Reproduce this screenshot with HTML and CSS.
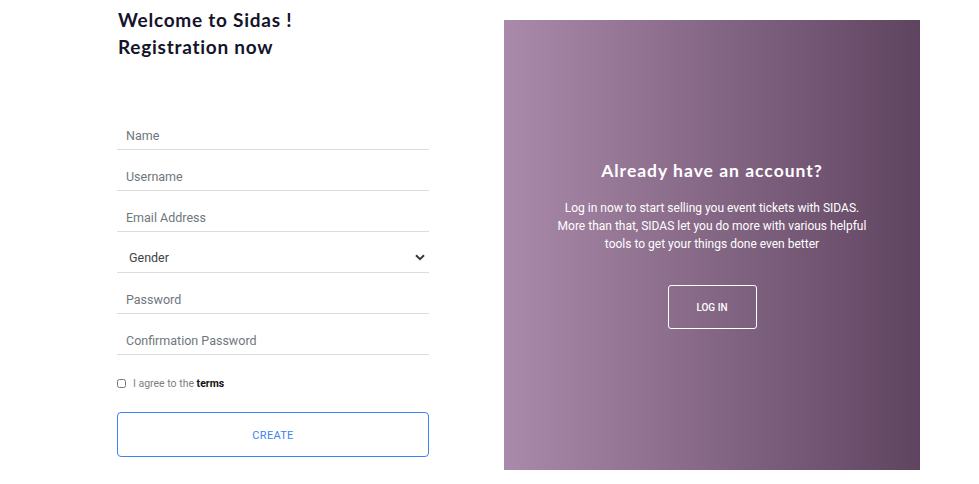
FILE: index.html
```html
<!DOCTYPE html>
<html>
<head>
<meta charset="utf-8">
<link rel="stylesheet" href="styles.css">
</head>
<body>
<div class="page">
  <section class="form-col">
    <h1 class="title">Welcome to Sidas !<br>Registration now</h1>
    <form class="form">
      <div class="field"><input class="input" placeholder="Name"></div>
      <div class="field"><input class="input" placeholder="Username"></div>
      <div class="field"><input class="input" placeholder="Email Address"></div>
      <div class="field select-field">
        <span class="select-text">Gender</span>
        <svg class="chev" width="10" height="7" viewBox="0 0 10 7"><path d="M1 1.2 L5 5.2 L9 1.2" fill="none" stroke="#343a40" stroke-width="2"/></svg>
      </div>
      <div class="field"><input class="input" placeholder="Password"></div>
      <div class="field"><input class="input" placeholder="Confirmation Password"></div>
      <label class="agree"><input type="checkbox" class="check"><span>I agree to the <b>terms</b></span></label>
      <button type="button" class="create">CREATE</button>
    </form>
  </section>
  <section class="panel">
    <h2 class="panel-title">Already have an account?</h2>
    <p class="panel-text">Log in now to start selling you event tickets with SIDAS.<br>More than that, SIDAS let you do more with various helpful<br>tools to get your things done even better</p>
    <button type="button" class="login">LOG IN</button>
  </section>
</div>
</body>
</html>
```
FILE: styles.css
```css
* { box-sizing: border-box; }
html, body { margin: 0; padding: 0; background: #fff; }
body { font-family: Roboto, "Liberation Sans", sans-serif; width: 979px; height: 484px; overflow: hidden; }
.page { display: flex; padding-left: 117px; gap: 75px; }
.form-col { width: 312px; }
.title {
  font-family: Lato, "Open Sans", sans-serif;
  font-weight: 700;
  font-size: 19px;
  line-height: 27px;
  color: #14142b;
  margin: 6px 0 0 1px;
  letter-spacing: 0.75px;
}
.form { margin-top: 49px; }
.field {
  height: 41px;
  border-bottom: 1px solid #dcdcdc;
  display: flex;
  align-items: center;
  padding-top: 12px;
}
.input {
  border: 0;
  outline: 0;
  width: 100%;
  padding: 0 0 0 9px;
  font-family: Roboto, sans-serif;
  font-size: 12.5px;
  background: transparent;
}
.input::placeholder { color: #6f767d; }
.select-field { justify-content: space-between; padding-left: 12px; padding-right: 4px; padding-top: 11px; }
.select-text { font-size: 12.5px; color: #3d4349; }
.agree {
  display: flex;
  align-items: center;
  gap: 7px;
  margin-top: 22px;
  font-size: 10.5px;
  color: #7a7f85;
}
.agree b { color: #111; font-weight: 700; }
.check { margin: 0; width: 9px; height: 9px; }
.create {
  display: block;
  width: 312px;
  height: 45px;
  margin-top: 22px;
  padding-top: 2px;
  border: 1px solid #3a82f7;
  border-radius: 4px;
  background: #fff;
  color: #3a82f7;
  font-family: Roboto, sans-serif;
  font-size: 11px;
  letter-spacing: 0.3px;
}
.panel {
  width: 416px;
  height: 450px;
  margin-top: 20px;
  background: linear-gradient(90deg, #aa8aaa 0%, #5f4460 100%);
  display: flex;
  flex-direction: column;
  align-items: center;
  color: #fff;
}
.panel-title {
  font-family: Lato, "Open Sans", sans-serif;
  font-weight: 700;
  font-size: 17.5px;
  margin: 140px 0 0;
  line-height: 22px;
  letter-spacing: 1px;
}
.panel-text {
  margin: 17px 0 0;
  font-size: 12px;
  line-height: 18px;
  text-align: center;
}
.login {
  margin-top: 32px;
  width: 89px;
  height: 44px;
  border: 1px solid #fff;
  border-radius: 3px;
  background: transparent;
  color: #fff;
  font-family: Roboto, sans-serif;
  font-weight: 500;
  font-size: 10px;
}
```
